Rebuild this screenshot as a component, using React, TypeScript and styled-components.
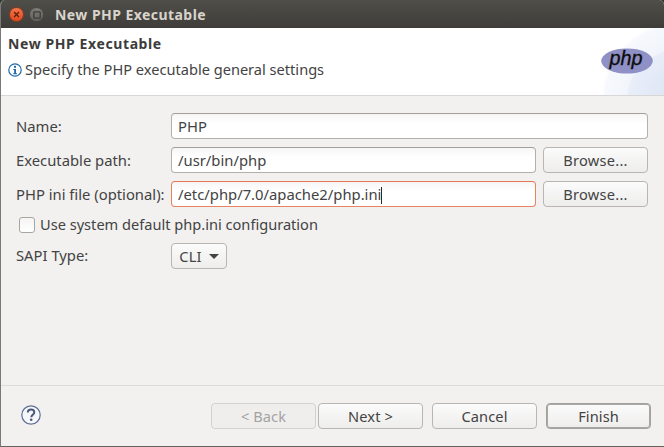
import React from "react";
import styled, { createGlobalStyle } from "styled-components";

const Global = createGlobalStyle`
  html, body { margin: 0; padding: 0; background: #3b3a36; }
  #root { width: 664px; height: 447px; overflow: hidden; }
  * { box-sizing: border-box; }
`;

const FONT = `"Noto Sans", "Open Sans", sans-serif`;

const Desktop = styled.div`
  width: 664px;
  height: 447px;
  background: #2c3a2e;
  font-family: ${FONT};
  color: #434343;
`;

const Window = styled.div`
  width: 664px;
  height: 447px;
  display: flex;
  flex-direction: column;
  border-left: 1px solid #7b7977;
  border-bottom: 1px solid #66645f;
  border-radius: 5px 5px 0 0;
  background: #f2f1f0;
  overflow: hidden;
`;

const TitleBar = styled.div`
  flex: 0 0 28px;
  display: flex;
  align-items: center;
  padding-left: 8px;
  padding-top: 1px;
  background: linear-gradient(#504e49, #3e3d39);
`;

const WinButton = styled.div<{ $close?: boolean }>`
  width: 15px;
  height: 15px;
  margin-right: 5px;
  border-radius: 50%;
  display: flex;
  align-items: center;
  justify-content: center;
  background: ${(p) =>
    p.$close
      ? "linear-gradient(#f4744a, #df4a1e)"
      : "linear-gradient(#7e7c77, #63615c)"};
  border: 1px solid ${(p) => (p.$close ? "#8f3a1c" : "#4a4945")};
`;

const WindowTitle = styled.div`
  margin-left: 6px;
  font-size: 14px;
  font-weight: 700;
  color: #d8d4cc;
  white-space: nowrap;
  letter-spacing: 0.45px;
`;

const Banner = styled.div`
  flex: 0 0 68px;
  position: relative;
  display: flex;
  justify-content: space-between;
  background:
    radial-gradient(ellipse 70px 50px at 105% 100%, rgba(214, 224, 242, 0.8), rgba(222, 230, 245, 0.45) 98%, rgba(255, 255, 255, 0) 100%),
    radial-gradient(ellipse 95px 78px at 105% 100%, rgba(226, 233, 247, 0.9), rgba(240, 244, 251, 0.6) 96%, rgba(255, 255, 255, 0) 100%),
    #fff;
  border-bottom: 1px solid #d9d7d5;
`;

const BannerText = styled.div`
  padding: 7px 0 0 7px;
  display: flex;
  flex-direction: column;
`;

const BannerTitle = styled.div`
  font-size: 14px;
  line-height: 18px;
  font-weight: 700;
  color: #3c3c3c;
  letter-spacing: 0.6px;
  white-space: nowrap;
`;

const BannerMessage = styled.div`
  margin-top: 7px;
  display: flex;
  align-items: center;
  font-size: 14.6px;
  line-height: 19px;
  white-space: nowrap;
`;

const InfoIcon = styled.svg`
  width: 14px;
  height: 14px;
  margin-right: 3px;
  flex: none;
`;

const Logo = styled.svg`
  width: 52px;
  height: 30px;
  margin: 18px 11px 0 0;
`;

const Form = styled.div`
  flex: 1;
  padding: 17px 15px 0 15px;
  display: grid;
  grid-template-columns: 155px 365px 112px;
  grid-template-rows: 26px 26px 26px 20px 26px;
  row-gap: 8px;
  align-content: start;
`;

const Label = styled.div<{ $raised?: boolean }>`
  font-size: 14.8px;
  line-height: ${(p) => (p.$raised ? "25px" : "26px")};
  white-space: nowrap;
`;

const Field = styled.div<{ $focused?: boolean; $wide?: boolean }>`
  grid-column: ${(p) => (p.$wide ? "2 / span 2" : "2")};
  height: 26px;
  padding-left: 6px;
  font-size: 14.8px;
  line-height: 25px;
  border: 1px solid ${(p) => (p.$focused ? "#e9825f" : "#b3b0ac")};
  border-top-color: ${(p) => (p.$focused ? "#e6764f" : "#a3a09c")};
  border-radius: 4px;
  background: linear-gradient(#f6f6f6, #fff 40%);
  white-space: nowrap;
`;

const Caret = styled.span`
  display: inline-block;
  width: 1px;
  height: 17px;
  vertical-align: -4px;
  background: #2a2a2a;
`;

const Button = styled.div<{ $disabled?: boolean; $default?: boolean }>`
  height: 26px;
  width: 105px;
  display: flex;
  align-items: center;
  justify-content: center;
  font-size: 14.6px;
  letter-spacing: 0.25px;
  border-radius: 4px;
  color: ${(p) => (p.$disabled ? "#a3a3a3" : "#434343")};
  border: 1px solid ${(p) => (p.$disabled ? "#d3d1cf" : p.$default ? "#a3a19e" : "#b8b5b2")};
  background: ${(p) =>
    p.$disabled ? "#efeeed" : "linear-gradient(#fbfbfb, #eeedec)"};
  box-shadow: ${(p) => (p.$default ? "inset 0 0 0 1px #a9a7a4" : "none")};
`;

const BrowseButton = styled(Button)`
  justify-self: end;
`;

const CheckRow = styled.div`
  grid-column: 1 / span 3;
  height: 20px;
  padding-left: 3px;
  display: flex;
  align-items: center;
  white-space: nowrap;
`;

const CheckLabel = styled.span`
  font-size: 14.6px;
  padding-bottom: 2px;
`;

const CheckBox = styled.div`
  width: 16px;
  height: 16px;
  margin-right: 5px;
  border: 1px solid #a9a6a2;
  border-radius: 3px;
  background: linear-gradient(#f5f5f5, #fff);
`;

const Select = styled(Button)`
  width: 56px;
  gap: 7px;
  justify-self: start;
`;

const Arrow = styled.span`
  width: 0;
  height: 0;
  border-left: 5px solid transparent;
  border-right: 5px solid transparent;
  border-top: 5px solid #434343;
`;

const Footer = styled.div`
  flex: 0 0 61px;
  display: flex;
  align-items: flex-start;
  padding: 17px 13px 0 20px;
  border-top: 1px solid #dddbd9;
`;

const HelpIcon = styled.svg`
  width: 20px;
  height: 20px;
  margin-top: 2px;
`;

const ButtonBar = styled.div`
  margin-left: auto;
  display: flex;
`;

const NavButton = styled(Button)<{ $gap?: number }>`
  margin-left: ${(p) => p.$gap ?? 0}px;
  letter-spacing: 0.1px;
`;

export default function App() {
  return (
    <Desktop>
      <Global />
      <Window>
        <TitleBar>
          <WinButton $close>
            <svg width="7" height="7" viewBox="0 0 8 8">
              <path d="M1.2 1.2 6.8 6.8M6.8 1.2 1.2 6.8" stroke="#5a1d08" strokeWidth="1.4" />
            </svg>
          </WinButton>
          <WinButton>
            <svg width="8" height="8" viewBox="0 0 8 8">
              <rect x="0.8" y="0.8" width="6.4" height="6.4" rx="0.8" fill="none" stroke="#3d3c38" strokeWidth="1.3" />
            </svg>
          </WinButton>
          <WindowTitle>New PHP Executable</WindowTitle>
        </TitleBar>
        <Banner>
          <BannerText>
            <BannerTitle>New PHP Executable</BannerTitle>
            <BannerMessage>
              <InfoIcon viewBox="0 0 14 14">
                <circle cx="7" cy="7" r="6.2" fill="#fff" stroke="#1f6aa8" strokeWidth="1.2" />
                <rect x="6" y="2.8" width="2" height="2" fill="#1f6aa8" />
                <path d="M5.2 6h2.8v4.2h1v1H5.2v-1h1V7h-1z" fill="#1f6aa8" />
              </InfoIcon>
              Specify the PHP executable general settings
            </BannerMessage>
          </BannerText>
          <Logo viewBox="0 0 52 30">
            <ellipse cx="26" cy="15" rx="25.8" ry="12.6" fill="#8f90c6" />
            <text
              x="25"
              y="19"
              textAnchor="middle"
              fontFamily="'Liberation Sans', sans-serif"
              fontStyle="italic"
              fontSize="20"
              fill="#0c0c0c"
              stroke="#0c0c0c"
              strokeWidth="0.35"
              textLength="33"
              lengthAdjust="spacingAndGlyphs"
            >
              php
            </text>
          </Logo>
        </Banner>
        <Form>
          <Label>Name:</Label>
          <Field $wide>PHP</Field>
          <Label>Executable path:</Label>
          <Field>/usr/bin/php</Field>
          <BrowseButton>Browse...</BrowseButton>
          <Label>PHP ini file (optional):</Label>
          <Field $focused>
            /etc/php/7.0/apache2/php.ini
            <Caret />
          </Field>
          <BrowseButton>Browse...</BrowseButton>
          <CheckRow>
            <CheckBox />
            <CheckLabel>Use system default php.ini configuration</CheckLabel>
          </CheckRow>
          <Label $raised>SAPI Type:</Label>
          <Select>
            CLI
            <Arrow />
          </Select>
        </Form>
        <Footer>
          <HelpIcon viewBox="0 0 20 20">
            <circle cx="10" cy="10" r="9.2" fill="#f7f7fa" stroke="#5b6f96" strokeWidth="1.2" />
            <path
              d="M6.8 7.4C6.8 5.5 8.2 4.5 10 4.5s3.3 1 3.3 2.8c0 2.4-3 2.5-3 4.9"
              fill="none"
              stroke="#4a5a7c"
              strokeWidth="2"
            />
            <circle cx="10.2" cy="14.8" r="1.3" fill="#4a5a7c" />
          </HelpIcon>
          <ButtonBar>
            <NavButton $disabled>&lt; Back</NavButton>
            <NavButton $gap={2}>Next &gt;</NavButton>
            <NavButton $gap={9}>Cancel</NavButton>
            <NavButton $gap={9} $default>Finish</NavButton>
          </ButtonBar>
        </Footer>
      </Window>
    </Desktop>
  );
}
